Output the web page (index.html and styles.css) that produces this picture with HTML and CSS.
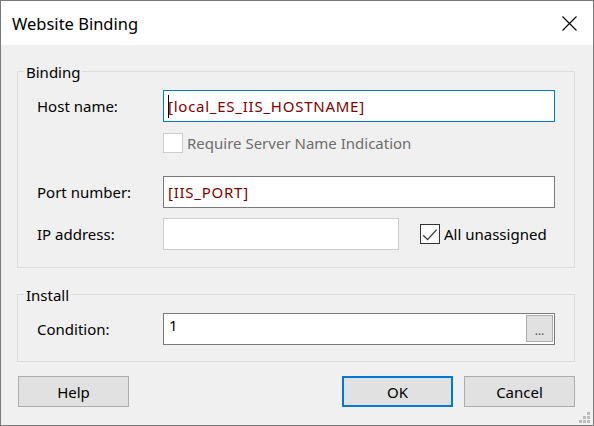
FILE: index.html
```html
<!DOCTYPE html>
<html lang="en">
<head>
<meta charset="utf-8">
<title>Website Binding</title>
<link rel="stylesheet" href="styles.css">
</head>
<body>
<div class="window">
  <div class="titlebar">
    <span class="title">Website Binding</span>
    <span class="close" aria-label="Close">
      <svg width="15" height="15" viewBox="0 0 15 15"><path d="M0.5 0.5 L14.5 14.5 M14.5 0.5 L0.5 14.5" stroke="#000" stroke-width="1.1" fill="none"/></svg>
    </span>
  </div>
  <div class="content">
    <div class="group binding">
      <span class="legend">Binding</span>
      <div class="row">
        <span class="label">Host name:</span>
        <div class="input focused"><span class="caret"></span>[local_ES_IIS_HOSTNAME]</div>
      </div>
      <div class="row check-row">
        <span class="checkbox disabled"></span>
        <span class="check-text disabled-text">Require Server Name Indication</span>
      </div>
      <div class="row port-row">
        <span class="label">Port number:</span>
        <div class="input">[IIS_PORT]</div>
      </div>
      <div class="row ip-row">
        <span class="label">IP address:</span>
        <div class="input ip-input"></div>
        <span class="checkbox checked">
          <svg width="18" height="18" viewBox="0 0 18 18"><path d="M2.2 10.3 L6.6 14.6 L15.6 4.6" stroke="#333" stroke-width="1.3" fill="none"/></svg>
        </span>
        <span class="check-text">All unassigned</span>
      </div>
    </div>
    <div class="group install">
      <span class="legend">Install</span>
      <div class="row">
        <span class="label">Condition:</span>
        <div class="input cond-input">
          <span class="cond-text">1</span>
          <span class="browse">…</span>
        </div>
      </div>
    </div>
    <div class="buttons">
      <button class="btn help">Help</button>
      <button class="btn default ok">OK</button>
      <button class="btn cancel">Cancel</button>
    </div>
  </div>
  <svg class="grip" width="11" height="11" viewBox="0 0 11 11">
    <rect x="8" y="0" width="3" height="3" fill="#bcbcbc"/>
    <rect x="4" y="4" width="3" height="3" fill="#bcbcbc"/>
    <rect x="8" y="4" width="3" height="3" fill="#bcbcbc"/>
    <rect x="0" y="8" width="3" height="3" fill="#bcbcbc"/>
    <rect x="4" y="8" width="3" height="3" fill="#bcbcbc"/>
    <rect x="8" y="8" width="3" height="3" fill="#bcbcbc"/>
  </svg>
</div>
</body>
</html>
```

FILE: styles.css
```css
* { box-sizing: border-box; }

html, body {
  margin: 0;
  padding: 0;
  background: #f0f0f0;
}

body {
  font-family: "Noto Sans", "Open Sans", sans-serif;
  font-size: 15px;
  color: #000;
}

.window {
  position: relative;
  width: 594px;
  height: 426px;
  border: 1px solid #7a7a7a;
  background: #f0f0f0;
  display: flex;
  flex-direction: column;
}

.titlebar {
  height: 44px;
  background: #fff;
  display: flex;
  align-items: center;
  padding-left: 11px;
  padding-right: 16px;
}

.title {
  font-size: 16.5px;
  flex: 1;
}

.close {
  display: flex;
  width: 15px;
  height: 15px;
  margin-top: 1px;
}

.content {
  padding: 26px 18px 0 16px;
  display: flex;
  flex-direction: column;
}

.group {
  position: relative;
  border: 1px solid #dcdcdc;
  padding: 18px 19px 17px 19px;
}

.install {
  margin-top: 26px;
  padding-bottom: 16px;
}

.legend {
  position: absolute;
  left: 6px;
  top: -10px;
  padding: 0 2px;
  line-height: 20px;
  background: #f0f0f0;
}

.row {
  display: flex;
  align-items: center;
  height: 32px;
}

.label {
  width: 126px;
  flex: none;
}

.input {
  flex: 1;
  height: 32px;
  background: #fff;
  border: 1px solid #7a7a7a;
  color: #800000;
  padding-left: 4px;
  display: flex;
  align-items: center;
  white-space: nowrap;
  letter-spacing: 0.75px;
}

.input.focused {
  border-color: #0078d7;
}

.caret {
  display: inline-block;
  width: 1px;
  height: 23px;
  background: #000;
  margin-right: -1px;
}

.check-row {
  height: 20px;
  margin-top: 11px;
  padding-left: 126px;
}

.port-row {
  margin-top: 23px;
}

.ip-row {
  margin-top: 10px;
}

.ip-input {
  flex: none;
  width: 236px;
  border-color: #cccccc;
}

.checkbox {
  flex: none;
  width: 20px;
  height: 20px;
  background: #fff;
  border: 1px solid #333;
  display: flex;
}

.checkbox.disabled {
  border-color: #cccccc;
}

.ip-row .checkbox {
  margin-left: 21px;
}

.check-text {
  margin-left: 4px;
}

.disabled-text {
  color: #6d6d6d;
}

.cond-input {
  align-items: flex-start;
  justify-content: space-between;
  padding-right: 1px;
  letter-spacing: 0;
}

.cond-text {
  color: #000;
  line-height: 20px;
  margin-top: 1px;
  margin-left: 1px;
}

.browse {
  width: 27px;
  height: 27px;
  margin-top: 1px;
  background: #e1e1e1;
  border: 1px solid #adadad;
  color: #555;
  font-size: 12px;
  line-height: 30px;
  text-align: center;
}

.buttons {
  display: flex;
  margin-top: 14px;
  padding-left: 1px;
}

.btn {
  font: inherit;
  color: #000;
  width: 111px;
  height: 31px;
  background: #e1e1e1;
  border: 1px solid #adadad;
  padding: 0;
  margin: 0;
}

.btn.default {
  border: 2px solid #0078d7;
}

.ok {
  margin-left: auto;
}

.cancel {
  margin-left: 11px;
}

.grip {
  position: absolute;
  right: 3px;
  bottom: 2px;
}
```
